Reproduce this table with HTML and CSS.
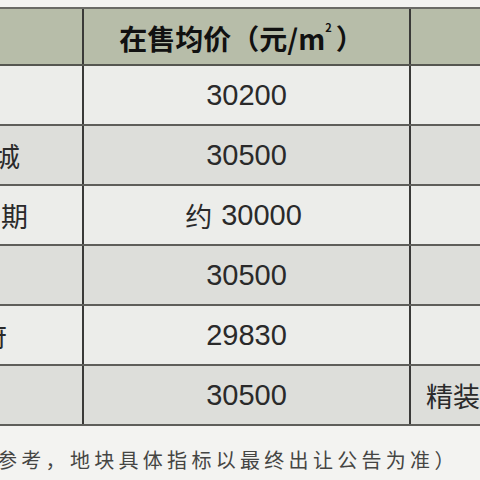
FILE: index.html
```html
<!DOCTYPE html>
<html lang="zh">
<head>
<meta charset="utf-8">
<link rel="stylesheet" href="styles.css">
</head>
<body>
<div class="page">
  <div class="table">
    <div class="row head">
      <div class="cell c1"></div>
      <div class="cell c2">在售均价（元/m<span class="sup">2</span>）</div>
      <div class="cell c3"></div>
    </div>
    <div class="row light">
      <div class="cell c1"></div>
      <div class="cell c2">30200</div>
      <div class="cell c3"></div>
    </div>
    <div class="row shade">
      <div class="cell c1"><span class="name n-cheng">城</span></div>
      <div class="cell c2">30500</div>
      <div class="cell c3"></div>
    </div>
    <div class="row light">
      <div class="cell c1"><span class="name n-qi">期</span></div>
      <div class="cell c2"><span class="cn approx">约</span><span>30000</span></div>
      <div class="cell c3"></div>
    </div>
    <div class="row shade">
      <div class="cell c1"></div>
      <div class="cell c2">30500</div>
      <div class="cell c3"></div>
    </div>
    <div class="row light">
      <div class="cell c1"><span class="name n-fu">府</span></div>
      <div class="cell c2">29830</div>
      <div class="cell c3"></div>
    </div>
    <div class="row shade last">
      <div class="cell c1"></div>
      <div class="cell c2">30500</div>
      <div class="cell c3"><span class="cn">精装</span></div>
    </div>
  </div>
  <p class="note">参考，地块具体指标以最终出让公告为准）</p>
</div>
</body>
</html>
```

FILE: styles.css
```css
html, body {
  margin: 0;
  padding: 0;
  background: #f3f3f1;
  overflow: hidden;
}
.page {
  width: 480px;
  height: 480px;
  overflow: hidden;
  padding-top: 7px;
  box-sizing: border-box;
}
.table {
  margin-left: -116px;
  width: 760px;
  border-top: 2px solid #6a6a66;
}
.row {
  display: grid;
  grid-template-columns: 200px 327px 233px;
  height: 60px;
  border-bottom: 2px solid #5e5e5a;
  box-sizing: border-box;
}
.row.head {
  height: 57px;
  background: #b7bda9;
  border-bottom-color: #555650;
}
.row.light { background: #ecedea; }
.row.shade { background: #dddeda; }
.cell {
  display: flex;
  align-items: center;
  justify-content: center;
  font-family: "Liberation Sans", Arial, sans-serif;
  font-size: 29px;
  color: #2a2a2a;
  border-right: 2px solid #3a3a38;
}
.cell.c3 { border-right: none; justify-content: flex-start; padding-left: 15px; }
.cell.c1 { justify-content: flex-end; }
.head .c2 {
  font-family: "Noto Sans CJK SC", sans-serif;
  font-weight: 700;
  font-size: 28px;
  color: #111;
  padding-top: 2px;
  padding-right: 10px;
}
.sup {
  font-size: 11px;
  position: relative;
  top: -11px;
  margin-right: 4px;
}
.cn {
  font-family: "Noto Sans CJK SC", sans-serif;
  font-size: 27px;
  color: #2a2a2a;
}
.approx { margin-right: 9px; margin-left: -6px; }
.name {
  font-family: "Noto Sans CJK SC", sans-serif;
  font-size: 27px;
  color: #2a2a2a;
}
.n-cheng { margin-right: 62px; }
.n-qi { margin-right: 54px; }
.n-fu { margin-right: 75px; }
.note {
  margin: 20px 0 0 -3px;
  font-family: "Noto Sans CJK SC", sans-serif;
  font-size: 20px;
  letter-spacing: 4.3px;
  color: #454543;
  white-space: nowrap;
  line-height: 28px;
}
```
